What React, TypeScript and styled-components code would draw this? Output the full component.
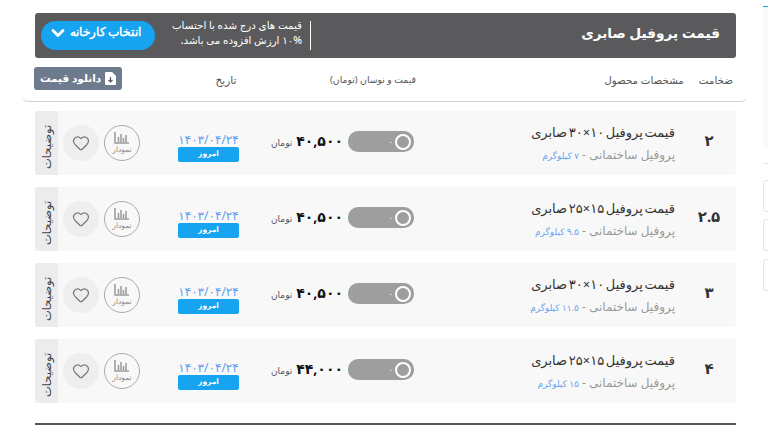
import React from 'react'
import styled, { createGlobalStyle } from 'styled-components'
import { ChevronDown, Heart } from 'lucide-react'

const GlobalStyle = createGlobalStyle`
  html, body { margin: 0; padding: 0; background: #fff; overflow: hidden; }
  body { width: 768px; height: 425px; font-family: "Noto Sans", "DejaVu Sans", sans-serif; }
`

const Page = styled.div`
  position: relative;
  width: 768px;
  height: 425px;
  overflow: hidden;
  padding: 13px 0 0 35px;
  box-sizing: border-box;
`

const Main = styled.div`
  width: 701px;
  display: flex;
  flex-direction: column;
`

const Banner = styled.div`
  height: 45px;
  background: #5a5a5c;
  border-radius: 3px;
  display: flex;
  direction: rtl;
  align-items: center;
  padding: 0 16px 0 6px;
  color: #fff;
`

const BannerTitle = styled.h1`
  margin: 0 0 7px;
  font-size: 13.7px;
  font-weight: 600;
  flex: 1;
`

const Note = styled.div`
  width: 156px;
  height: 29px;
  box-sizing: border-box;
  border-right: 1px solid #fff;
  padding-right: 8px;
  font-size: 10.3px;
  line-height: 15px;
  white-space: nowrap;
  font-weight: 500;
`

const NoteText = styled.div`
  margin-top: -3px;
`

const FactoryButton = styled.button`
  width: 114px;
  height: 29px;
  border: 0;
  border-radius: 15px;
  background: #16a3ef;
  color: #fff;
  font: 700 11.5px "Noto Sans", sans-serif;
  display: flex;
  align-items: center;
  justify-content: center;
  gap: 2px;
  direction: rtl;
  padding: 0 7px 8px 0;
`

const Chevron = styled(ChevronDown)`
  margin-bottom: -2px;
`

const HeaderRow = styled.div`
  height: 44px;
  margin-left: -13px;
  width: 725px;
  border-bottom: 1px solid #d0d0d0;
  border-radius: 0 0 6px 6px;
  box-sizing: border-box;
  display: grid;
  grid-template-columns: 12px 88px 208px 86px 1fr;
  align-items: center;
  font-size: 10.3px;
  color: #555;
  direction: ltr;
  white-space: nowrap;
`

const Spacer = styled.span``

const DownloadButton = styled.div`
  width: 88px;
  height: 23px;
  margin-top: -3px;
  background: #6e7b8e;
  border-radius: 3px;
  color: #fff;
  font-size: 10.5px;
  font-weight: 600;
  display: flex;
  align-items: center;
  justify-content: center;
  gap: 4px;
  direction: rtl;
`

const ColDate = styled.span`
  text-align: center;
  font-size: 10.5px;
`

const ColPrice = styled.span`
  display: flex;
  justify-content: flex-end;
  font-size: 9.3px;
`

const ColSpec = styled.div`
  display: flex;
  justify-content: flex-end;
  gap: 15px;
  padding-right: 14px;
`

const Rows = styled.div`
  display: flex;
  flex-direction: column;
  gap: 12px;
  margin-top: 9px;
`

const Row = styled.div`
  height: 64px;
  background: #f8f8f8;
  border-radius: 3px;
  display: flex;
  align-items: center;
`

const Tab = styled.div`
  width: 23px;
  align-self: stretch;
  box-sizing: border-box;
  padding-bottom: 7px;
  background: #ececec;
  border-radius: 0 3px 3px 0;
  display: flex;
  align-items: center;
  justify-content: center;
  writing-mode: vertical-rl;
  transform: rotate(180deg);
  font-size: 11.5px;
  color: #444;
  font-weight: 500;
`

const HeartCircle = styled.div`
  width: 36px;
  height: 36px;
  margin-left: 5px;
  border-radius: 50%;
  background: #eeeeee;
  color: #777;
  display: flex;
  align-items: center;
  justify-content: center;
`

const ChartCircle = styled.div`
  width: 36px;
  height: 36px;
  box-sizing: border-box;
  margin-left: 5px;
  border: 1px solid #aaa;
  border-radius: 50%;
  display: flex;
  flex-direction: column;
  align-items: center;
  justify-content: center;
  color: #888;
  font-size: 7.5px;
  line-height: 10px;
`

const DateBox = styled.div`
  width: 61px;
  margin-left: 38px;
  margin-top: 10px;
  display: flex;
  flex-direction: column;
  align-items: stretch;
`

const DateText = styled.div`
  height: 13px;
  color: #5b9df0;
  font-size: 12px;
  line-height: 11px;
  text-align: center;
  white-space: nowrap;
`

const Today = styled.div`
  height: 15px;
  background: #16a3ef;
  border-radius: 2px;
  color: #fff;
  font-size: 7.5px;
  font-weight: 700;
  line-height: 12px;
  text-align: center;
`

const PriceBox = styled.div`
  width: 72px;
  margin-left: 32px;
  display: flex;
  align-items: center;
  justify-content: space-between;
  direction: ltr;
`

const Unit = styled.span`
  font-size: 9px;
  color: #555;
  margin-top: -2px;
`

const Price = styled.span`
  font-size: 14px;
  font-weight: 700;
  color: #111;
  margin-bottom: 6px;
`

const Toggle = styled.div`
  width: 66px;
  height: 21px;
  margin: 0 0 3px 5px;
  background: #9e9e9e;
  border-radius: 10px;
  display: flex;
  align-items: center;
  justify-content: flex-end;
  gap: 2px;
  padding-right: 3px;
  box-sizing: border-box;
  color: #fff;
  font-size: 8px;
`

const Knob = styled.span`
  width: 12px;
  height: 12px;
  border: 2px solid #fff;
  border-radius: 50%;
`

const Spec = styled.div`
  flex: 1;
  display: flex;
  flex-direction: column;
  align-items: flex-start;
  direction: rtl;
  gap: 6px;
  margin-right: 7px;
`

const SpecTitle = styled.div`
  font-size: 13px;
  line-height: 18px;
  color: #333;
  word-spacing: -1.7px;
  white-space: nowrap;
`

const SpecSub = styled.div`
  font-size: 12px;
  line-height: 15px;
  color: #999;
  white-space: nowrap;
`

const Weight = styled.span`
  color: #6aa5f0;
  font-size: 9px;
`

const Thickness = styled.div`
  width: 54px;
  text-align: center;
  font-size: 15px;
  font-weight: 700;
  color: #333;
  margin-bottom: 6px;
`

const BottomBar = styled.div`
  height: 3px;
  margin-top: 20px;
  background: #555;
`

const SideBox = styled.div<{ $top: number }>`
  position: absolute;
  left: 763px;
  top: ${p => p.$top}px;
  width: 10px;
  height: 32px;
  box-sizing: border-box;
  border: 1px solid #e4e4e4;
  border-radius: 3px;
`

const SidePanel = styled.div`
  position: absolute;
  left: 763px;
  top: 6px;
  width: 10px;
  height: 141px;
  background: #f5fbff;
  border-top: 1px solid #16a3ef;
  box-sizing: border-box;
`

const SideLine = styled.div`
  position: absolute;
  left: 763px;
  top: 163px;
  width: 10px;
  height: 1px;
  background: #e4e4e4;
`

const rows = [
  { title: 'قیمت پروفیل ۱۰×۳۰ صابری', weight: '۷ کیلوگرم', size: '۲', price: '۴۰,۵۰۰' },
  { title: 'قیمت پروفیل ۱۵×۲۵ صابری', weight: '۹.۵ کیلوگرم', size: '۲.۵', price: '۴۰,۵۰۰' },
  { title: 'قیمت پروفیل ۱۰×۳۰ صابری', weight: '۱۱.۵ کیلوگرم', size: '۳', price: '۴۰,۵۰۰' },
  { title: 'قیمت پروفیل ۱۵×۲۵ صابری', weight: '۱۵ کیلوگرم', size: '۴', price: '۴۴,۰۰۰' },
]

function ChartIcon() {
  return (
    <svg width="16" height="12" viewBox="0 0 16 12" fill="none" stroke="#999" strokeWidth="1.5">
      <path d="M1 0v11h14M4.500 10V5M7 10V2M9.500 10V6M12 10V3" />
    </svg>
  )
}

function DocIcon() {
  return (
    <svg width="11" height="13" viewBox="0 0 11 13">
      <path d="M1 0h6l4 4v8a1 1 0 0 1-1 1H1a1 1 0 0 1-1-1V1a1 1 0 0 1 1-1z" fill="#fff" />
      <path d="M5.500 5v5M3.500 8l2 2 2-2" fill="none" stroke="#556" strokeWidth="1.2" />
    </svg>
  )
}

export default function App() {
  return (
    <Page>
      <GlobalStyle />
      <Main>
        <Banner>
          <BannerTitle>قیمت پروفیل صابری</BannerTitle>
          <Note>
            <NoteText>
              قیمت های درج شده با احتساب
              <br />
              ۱۰% ارزش افزوده می باشد.
            </NoteText>
          </Note>
          <FactoryButton>
            انتخاب کارخانه
            <Chevron size={20} strokeWidth={3.5} />
          </FactoryButton>
        </Banner>
        <HeaderRow>
          <Spacer />
          <DownloadButton>
            <DocIcon />
            دانلود قیمت
          </DownloadButton>
          <ColDate>تاریخ</ColDate>
          <ColPrice>قیمت و نوسان (تومان)</ColPrice>
          <ColSpec>
            <span>مشخصات محصول</span>
            <span>ضخامت</span>
          </ColSpec>
        </HeaderRow>
        <Rows>
          {rows.map((r, i) => (
            <Row key={i}>
              <Tab>توضیحات</Tab>
              <HeartCircle>
                <Heart size={18} strokeWidth={1.6} />
              </HeartCircle>
              <ChartCircle>
                <ChartIcon />
                نمودار
              </ChartCircle>
              <DateBox>
                <DateText>۱۴۰۳/۰۴/۲۴</DateText>
                <Today>امروز</Today>
              </DateBox>
              <PriceBox>
                <Unit>تومان</Unit>
                <Price>{r.price}</Price>
              </PriceBox>
              <Toggle>
                ۰
                <Knob />
              </Toggle>
              <Spec>
                <SpecTitle>{r.title}</SpecTitle>
                <SpecSub>
                  پروفیل ساختمانی - <Weight>{r.weight}</Weight>
                </SpecSub>
              </Spec>
              <Thickness>{r.size}</Thickness>
            </Row>
          ))}
        </Rows>
        <BottomBar />
      </Main>
      <SidePanel />
      <SideLine />
      <SideBox $top={180} />
      <SideBox $top={219} />
      <SideBox $top={259} />
    </Page>
  )
}
